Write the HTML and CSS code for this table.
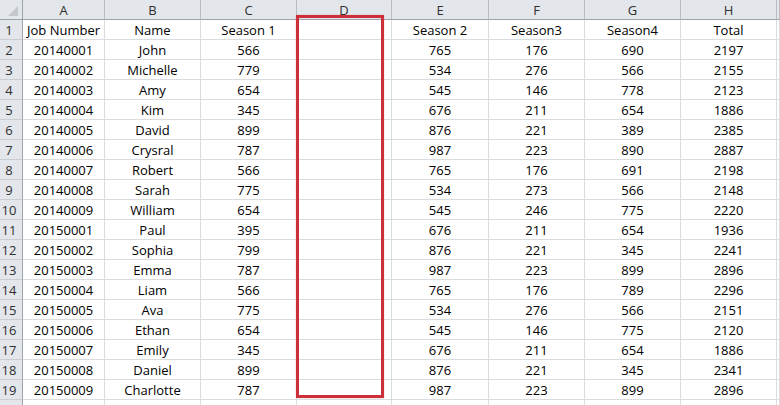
FILE: index.html
```html
<!DOCTYPE html>
<html>
<head>
<meta charset="utf-8">
<link rel="stylesheet" href="styles.css">
</head>
<body>
<div class="wrap">
<div class="sheet">
  <div class="hd corner"><span class="tri"></span></div>
  <div class="hd col">A</div><div class="hd col">B</div><div class="hd col">C</div><div class="hd col">D</div><div class="hd col">E</div><div class="hd col">F</div><div class="hd col">G</div><div class="hd col">H</div><div class="hd col"></div>

  <div class="hd rn">1</div><div class="c">Job Number</div><div class="c">Name</div><div class="c">Season 1</div><div class="c"></div><div class="c">Season 2</div><div class="c">Season3</div><div class="c">Season4</div><div class="c">Total</div><div class="c"></div>
  <div class="hd rn">2</div><div class="c">20140001</div><div class="c">John</div><div class="c">566</div><div class="c"></div><div class="c">765</div><div class="c">176</div><div class="c">690</div><div class="c">2197</div><div class="c"></div>
  <div class="hd rn">3</div><div class="c">20140002</div><div class="c">Michelle</div><div class="c">779</div><div class="c"></div><div class="c">534</div><div class="c">276</div><div class="c">566</div><div class="c">2155</div><div class="c"></div>
  <div class="hd rn">4</div><div class="c">20140003</div><div class="c">Amy</div><div class="c">654</div><div class="c"></div><div class="c">545</div><div class="c">146</div><div class="c">778</div><div class="c">2123</div><div class="c"></div>
  <div class="hd rn">5</div><div class="c">20140004</div><div class="c">Kim</div><div class="c">345</div><div class="c"></div><div class="c">676</div><div class="c">211</div><div class="c">654</div><div class="c">1886</div><div class="c"></div>
  <div class="hd rn">6</div><div class="c">20140005</div><div class="c">David</div><div class="c">899</div><div class="c"></div><div class="c">876</div><div class="c">221</div><div class="c">389</div><div class="c">2385</div><div class="c"></div>
  <div class="hd rn">7</div><div class="c">20140006</div><div class="c">Crysral</div><div class="c">787</div><div class="c"></div><div class="c">987</div><div class="c">223</div><div class="c">890</div><div class="c">2887</div><div class="c"></div>
  <div class="hd rn">8</div><div class="c">20140007</div><div class="c">Robert</div><div class="c">566</div><div class="c"></div><div class="c">765</div><div class="c">176</div><div class="c">691</div><div class="c">2198</div><div class="c"></div>
  <div class="hd rn">9</div><div class="c">20140008</div><div class="c">Sarah</div><div class="c">775</div><div class="c"></div><div class="c">534</div><div class="c">273</div><div class="c">566</div><div class="c">2148</div><div class="c"></div>
  <div class="hd rn">10</div><div class="c">20140009</div><div class="c">William</div><div class="c">654</div><div class="c"></div><div class="c">545</div><div class="c">246</div><div class="c">775</div><div class="c">2220</div><div class="c"></div>
  <div class="hd rn">11</div><div class="c">20150001</div><div class="c">Paul</div><div class="c">395</div><div class="c"></div><div class="c">676</div><div class="c">211</div><div class="c">654</div><div class="c">1936</div><div class="c"></div>
  <div class="hd rn">12</div><div class="c">20150002</div><div class="c">Sophia</div><div class="c">799</div><div class="c"></div><div class="c">876</div><div class="c">221</div><div class="c">345</div><div class="c">2241</div><div class="c"></div>
  <div class="hd rn">13</div><div class="c">20150003</div><div class="c">Emma</div><div class="c">787</div><div class="c"></div><div class="c">987</div><div class="c">223</div><div class="c">899</div><div class="c">2896</div><div class="c"></div>
  <div class="hd rn">14</div><div class="c">20150004</div><div class="c">Liam</div><div class="c">566</div><div class="c"></div><div class="c">765</div><div class="c">176</div><div class="c">789</div><div class="c">2296</div><div class="c"></div>
  <div class="hd rn">15</div><div class="c">20150005</div><div class="c">Ava</div><div class="c">775</div><div class="c"></div><div class="c">534</div><div class="c">276</div><div class="c">566</div><div class="c">2151</div><div class="c"></div>
  <div class="hd rn">16</div><div class="c">20150006</div><div class="c">Ethan</div><div class="c">654</div><div class="c"></div><div class="c">545</div><div class="c">146</div><div class="c">775</div><div class="c">2120</div><div class="c"></div>
  <div class="hd rn">17</div><div class="c">20150007</div><div class="c">Emily</div><div class="c">345</div><div class="c"></div><div class="c">676</div><div class="c">211</div><div class="c">654</div><div class="c">1886</div><div class="c"></div>
  <div class="hd rn">18</div><div class="c">20150008</div><div class="c">Daniel</div><div class="c">899</div><div class="c"></div><div class="c">876</div><div class="c">221</div><div class="c">345</div><div class="c">2341</div><div class="c"></div>
  <div class="hd rn">19</div><div class="c">20150009</div><div class="c">Charlotte</div><div class="c">787</div><div class="c"></div><div class="c">987</div><div class="c">223</div><div class="c">899</div><div class="c">2896</div><div class="c"></div>
  <div class="hd rn"></div><div class="c"></div><div class="c"></div><div class="c"></div><div class="c"></div><div class="c"></div><div class="c"></div><div class="c"></div><div class="c"></div><div class="c"></div>
</div>
<div class="highlight"></div>
</div>
</body>
</html>
```
FILE: styles.css
```css
html, body {
  margin: 0;
  padding: 0;
  background: #ffffff;
  overflow: hidden;
}
.wrap {
  position: relative;
  width: 780px;
  height: 405px;
  overflow: hidden;
}
.sheet {
  display: grid;
  grid-template-columns: 23px 82px 96px 96px 95px 97px 96px 96px 96px 1fr;
  grid-auto-rows: 20px;
  font-family: "Open Sans", "Noto Sans", sans-serif;
  font-size: 13px;
  color: #000;
}
.sheet > div {
  box-sizing: border-box;
  display: flex;
  align-items: center;
  justify-content: center;
  white-space: nowrap;
  overflow: hidden;
  padding-top: 1px;
}
.c {
  border-right: 1px solid #dadcdd;
  border-bottom: 1px solid #dadcdd;
}
.hd {
  background: #e3e6ea;
  color: #2f2f2f;
}
.col {
  border-right: 1px solid #b9bdc3;
  border-bottom: 1px solid #9ea3a9;
}
.rn {
  border-right: 1px solid #9ea3a9;
  border-bottom: 1px solid #c9ccd1;
  padding-right: 4px;
}
.corner {
  position: relative;
  border-right: 1px solid #9ea3a9;
  border-bottom: 1px solid #9ea3a9;
}
.tri {
  position: absolute;
  right: 4px;
  bottom: 3px;
  width: 0;
  height: 0;
  border-left: 10px solid transparent;
  border-bottom: 10px solid #c4c8cd;
}
.highlight {
  position: absolute;
  left: 296px;
  top: 15px;
  width: 88px;
  height: 383px;
  box-sizing: border-box;
  border: 3px solid #cc2f38;
  box-shadow: 0 0 1px rgba(204, 47, 56, 0.5);
}
```
